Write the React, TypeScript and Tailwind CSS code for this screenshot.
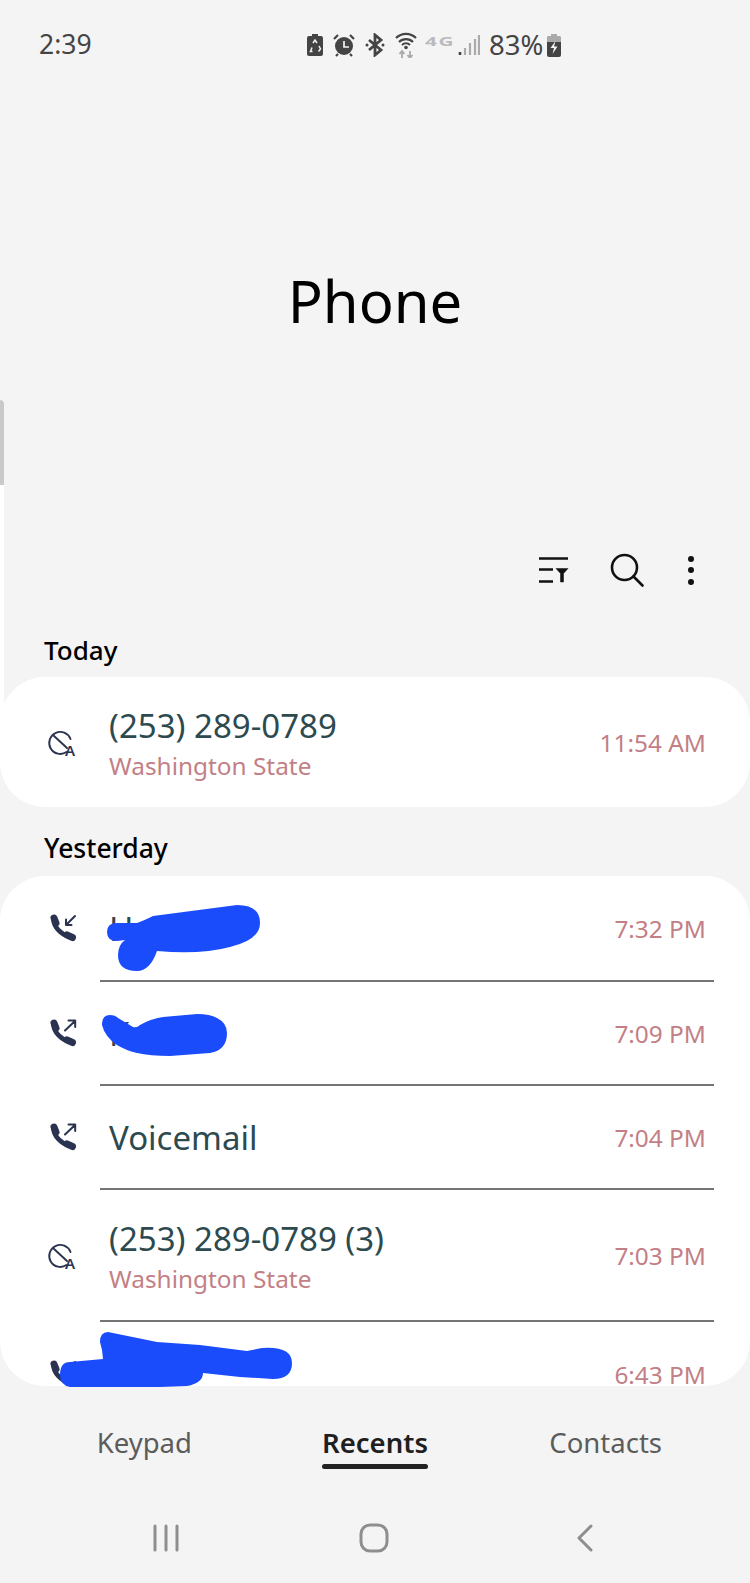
const font = "[font-family:'Noto_Sans',sans-serif]"

function PhoneIcon({ dir }: { dir: 'in' | 'out' }) {
  return (
    <svg width="30" height="30" viewBox="0 0 30 30" fill="none" stroke="#2a3350" strokeLinecap="round" strokeLinejoin="round" className="ml-[2px]">
      <path d="M5 5 L7 10" strokeWidth="7" />
      <path d="M4.5 7 C5 14 12 21.5 20 23.5" strokeWidth="4.6" />
      <path d="M18 22 L23.5 24.5" strokeWidth="7" />
      {dir === 'in' ? (
        <path d="M26 3 L17 12 M17 6.5 V12 H22.5" strokeWidth="2" />
      ) : (
        <path d="M16 12.5 L26 3 M19.5 2.5 H26.2 V9" strokeWidth="2" />
      )}
    </svg>
  )
}

function BlockIcon() {
  return (
    <svg width="30" height="30" viewBox="0 0 30 30" fill="none" stroke="#2a3350" strokeLinecap="round" className="mt-[3px]">
      <path d="M19.5 23 A11 11 0 1 1 23.5 10" strokeWidth="1.9" />
      <path d="M6.5 6.5 L20 19" strokeWidth="1.9" />
      <text x="18" y="26.5" fontSize="15" fontWeight="600" fill="#2a3350" stroke="none" fontFamily="Noto Sans">A</text>
    </svg>
  )
}

function Row({ icon, name, sub, time, h }: { icon: 'in' | 'out' | 'block'; name: string; sub?: string; time: string; h: string }) {
  return (
    <div className={`flex items-center pl-[47px] pr-[44px] shrink-0 ${h}`}>
      <div className="w-[62px] shrink-0">{icon === 'block' ? <BlockIcon /> : <PhoneIcon dir={icon} />}</div>
      <div className={`flex-1 ${sub ? 'pt-[4px]' : 'pt-[2px]'}`}>
        <div className="text-[33px] leading-[40px] text-[#2d4a4f]">{name}</div>
        {sub && <div className="mt-[4px] text-[24.4px] leading-[32px] text-[#c37f86]">{sub}</div>}
      </div>
      <div className="mt-[3px] text-[24.4px] text-[#c37f86]">{time}</div>
    </div>
  )
}

function Divider() {
  return <div className="ml-[100px] mr-[36px] h-[2px] bg-[#757575] shrink-0" />
}

function StatusIcons() {
  return (
    <div className="flex items-center ml-[215px]">
      <svg width="18" height="24" viewBox="0 0 18 24" className="mr-[8px]">
        <path d="M6 1h6v2h3a2 2 0 0 1 2 2v16a2 2 0 0 1-2 2H3a2 2 0 0 1-2-2V5a2 2 0 0 1 2-2h3z" fill="#444" />
        <path d="M7 10l2-3 2 3M13 13l1.5 3-2 2.5M6.5 18.5H4.5l1.5-4" stroke="#f4f4f4" strokeWidth="1.5" fill="none" />
      </svg>
      <svg width="24" height="24" viewBox="0 0 24 24" className="mr-[9px]">
        <circle cx="12" cy="13" r="9" fill="#444" />
        <path d="M12 8v6h5" stroke="#f4f4f4" strokeWidth="1.7" fill="none" />
        <path d="M2 6l4-4M22 6l-4-4M6 21l-2 2M18 21l2 2" stroke="#444" strokeWidth="2.2" />
      </svg>
      <svg width="20" height="24" viewBox="0 0 20 24" className="mr-[10px]">
        <path d="M4 7l12 10-6 5V2l6 5L4 17" stroke="#444" strokeWidth="2.8" fill="none" />
        <circle cx="2" cy="12" r="1.5" fill="#444" />
        <circle cx="18" cy="12" r="1.5" fill="#444" />
      </svg>
      <svg width="22" height="26" viewBox="0 0 22 26" className="mr-[8px]">
        <path d="M1 6a14 14 0 0 1 20 0M4 10a10 10 0 0 1 14 0M7 13a6 6 0 0 1 8 0" stroke="#444" strokeWidth="2.2" fill="none" />
        <circle cx="11" cy="15.5" r="1.8" fill="#444" />
        <path d="M7 19v7M4.5 22L7 19l2.5 3M15 26v-7M12.5 23l2.5 3 2.5-3" stroke="#aaa" strokeWidth="1.8" fill="none" />
      </svg>
      <span className="w-[33px] mb-[7px] text-[13px] leading-none font-bold text-[#bbb] scale-x-[1.6] origin-left tracking-[1px]">4G</span>
      <svg width="22" height="22" viewBox="0 0 22 22" className="mr-[9px]">
        <path d="M2 21v-3" stroke="#444" strokeWidth="2.6" />
        <path d="M7 21v-7M12 21V9M17 21V5M21 21V1" stroke="#aaa" strokeWidth="2.2" />
      </svg>
      <span className="text-[27.5px] leading-none text-[#444] mr-[3px]">83%</span>
      <svg width="16" height="24" viewBox="0 0 16 24">
        <path d="M5 1h6v2h3a2 2 0 0 1 1 1v6H1V4a2 2 0 0 1 1-1h3z" fill="#aaa" />
        <path d="M1 9h14v13a2 2 0 0 1-2 2H3a2 2 0 0 1-2-2z" fill="#444" />
        <path d="M9.5 8L4.5 15h3.5L6.5 21l5-7.500H8z" fill="#f4f4f4" />
      </svg>
    </div>
  )
}

export default function App() {
  return (
    <div className={`relative w-[750px] h-[1583px] overflow-hidden bg-[#f4f4f4] flex flex-col ${font}`}>
      {/* edge panel handle */}
      <div className="absolute left-0 top-[400px] w-[4px] h-[335px] rounded-r-[4px] bg-white">
        <div className="h-[85px] bg-[#c9c9c9] rounded-tr-[4px]" />
      </div>

      <div className="h-[90px] flex items-center pl-[39px] shrink-0">
        <span className="text-[26.5px] text-[#444] w-[52px]">2:39</span>
        <StatusIcons />
      </div>

      <div className="h-[440px] flex items-center justify-center pb-[20px] shrink-0">
        <h1 className="text-[58px] text-black font-normal">Phone</h1>
      </div>

      <div className="h-[80px] flex items-center justify-end pr-[56px] shrink-0">
        <svg width="32" height="28" viewBox="0 0 32 28" className="mr-[40px]" fill="none" stroke="#111">
          <path d="M1 2.5h29M1 13.5h14M1 25.5h14" strokeWidth="2.6" />
          <path d="M18 12.5h12l-4.500 5v8.500h-3v-8.500z" fill="#111" strokeWidth="0.5" />
        </svg>
        <svg width="34" height="34" viewBox="0 0 34 34" className="mr-[44px]" fill="none" stroke="#111" strokeWidth="2.6">
          <circle cx="14.5" cy="14.5" r="12.5" />
          <path d="M23.5 23.5L32.5 32.5" strokeLinecap="round" />
        </svg>
        <div className="flex flex-col gap-[5.5px] w-[6px]">
          <div className="w-[6px] h-[6px] rounded-full bg-[#111]" />
          <div className="w-[6px] h-[6px] rounded-full bg-[#111]" />
          <div className="w-[6px] h-[6px] rounded-full bg-[#111]" />
        </div>
      </div>

      <div className="h-[67px] pt-[13px] pl-[44px] flex items-center text-[26px] font-medium text-black shrink-0">Today</div>
      <div className="h-[130px] rounded-[45px] bg-white flex flex-col shrink-0">
        <Row icon="block" name="(253) 289-0789" sub="Washington State" time="11:54 AM" h="h-[130px]" />
      </div>

      <div className="h-[69px] pt-[15px] pl-[44px] flex items-center text-[26.5px] font-medium text-black shrink-0">Yesterday</div>
      <div className="h-[510px] rounded-[45px] bg-white flex flex-col overflow-hidden shrink-0">
        <Row icon="in" name="H" time="7:32 PM" h="h-[104px]" />
        <Divider />
        <Row icon="out" name="K" time="7:09 PM" h="h-[102px]" />
        <Divider />
        <Row icon="out" name="Voicemail" time="7:04 PM" h="h-[102px]" />
        <Divider />
        <Row icon="block" name="(253) 289-0789 (3)" sub="Washington State" time="7:03 PM" h="h-[130px]" />
        <Divider />
        <Row icon="in" name="M" time="6:43 PM" h="h-[104px]" />
      </div>

      <div className="grid grid-cols-3 px-[29px] pt-[37px] text-center text-[27.5px] leading-[40px] text-[#5c5c5c] shrink-0">
        <div>Keypad</div>
        <div className="flex justify-center">
          <div className="relative font-semibold text-[#1f1f1f]">
            Recents
            <div className="absolute left-0 right-0 top-[41px] h-[5px] rounded-full bg-[#222]" />
          </div>
        </div>
        <div>Contacts</div>
      </div>

      <div className="flex-1 flex items-center justify-center mt-[30px] pr-[4px]">
        <div className="w-[441px] flex items-center justify-between">
          <svg width="26" height="28" viewBox="0 0 26 28" stroke="#8e8e8e" strokeWidth="3" strokeLinecap="round">
            <path d="M2 2v24M13 2v24M24 2v24" />
          </svg>
          <svg width="30" height="30" viewBox="0 0 30 30" fill="none" stroke="#8e8e8e" strokeWidth="3" className="mr-[7px]">
            <rect x="2" y="2" width="26" height="26" rx="9" />
          </svg>
          <svg width="18" height="28" viewBox="0 0 18 28" fill="none" stroke="#8e8e8e" strokeWidth="3" strokeLinecap="round" strokeLinejoin="round">
            <path d="M15 2L3 14l12 12" />
          </svg>
        </div>
      </div>

      {/* blue scribbles drawn over names */}
      <svg className="absolute left-0 top-0 pointer-events-none" width="750" height="1583" viewBox="0 0 750 1583" fill="#1a4cfc">
        <path d="M107 932Q107 923 117 923L137 923Q143 921 153 916L237 905Q260 905 260 923Q260 940 230 947Q200 955 157 951Q150 971 137 971Q118 971 118 955Q118 945 125 940L117 941Q107 941 107 932Z" />
        <path d="M102 1025Q102 1015 110 1015Q115 1015 118 1018L133 1027Q137 1028 140 1025Q150 1019 163 1017L197 1014Q210 1014 217 1018Q227 1023 227 1033Q227 1050 210 1053L170 1056Q150 1056 137 1053Q125 1050 117 1045Q105 1037 102 1025Z" />
        <path d="M100 1342Q100 1332 108 1332L157 1342L200 1345L247 1351L262 1348Q292 1346 292 1363Q292 1379 273 1379L240 1377L203 1373Q203 1383 187 1386L160 1387H70Q60 1385 60 1375Q60 1362 70 1362L103 1359L102 1350Z" />
      </svg>
    </div>
  )
}
